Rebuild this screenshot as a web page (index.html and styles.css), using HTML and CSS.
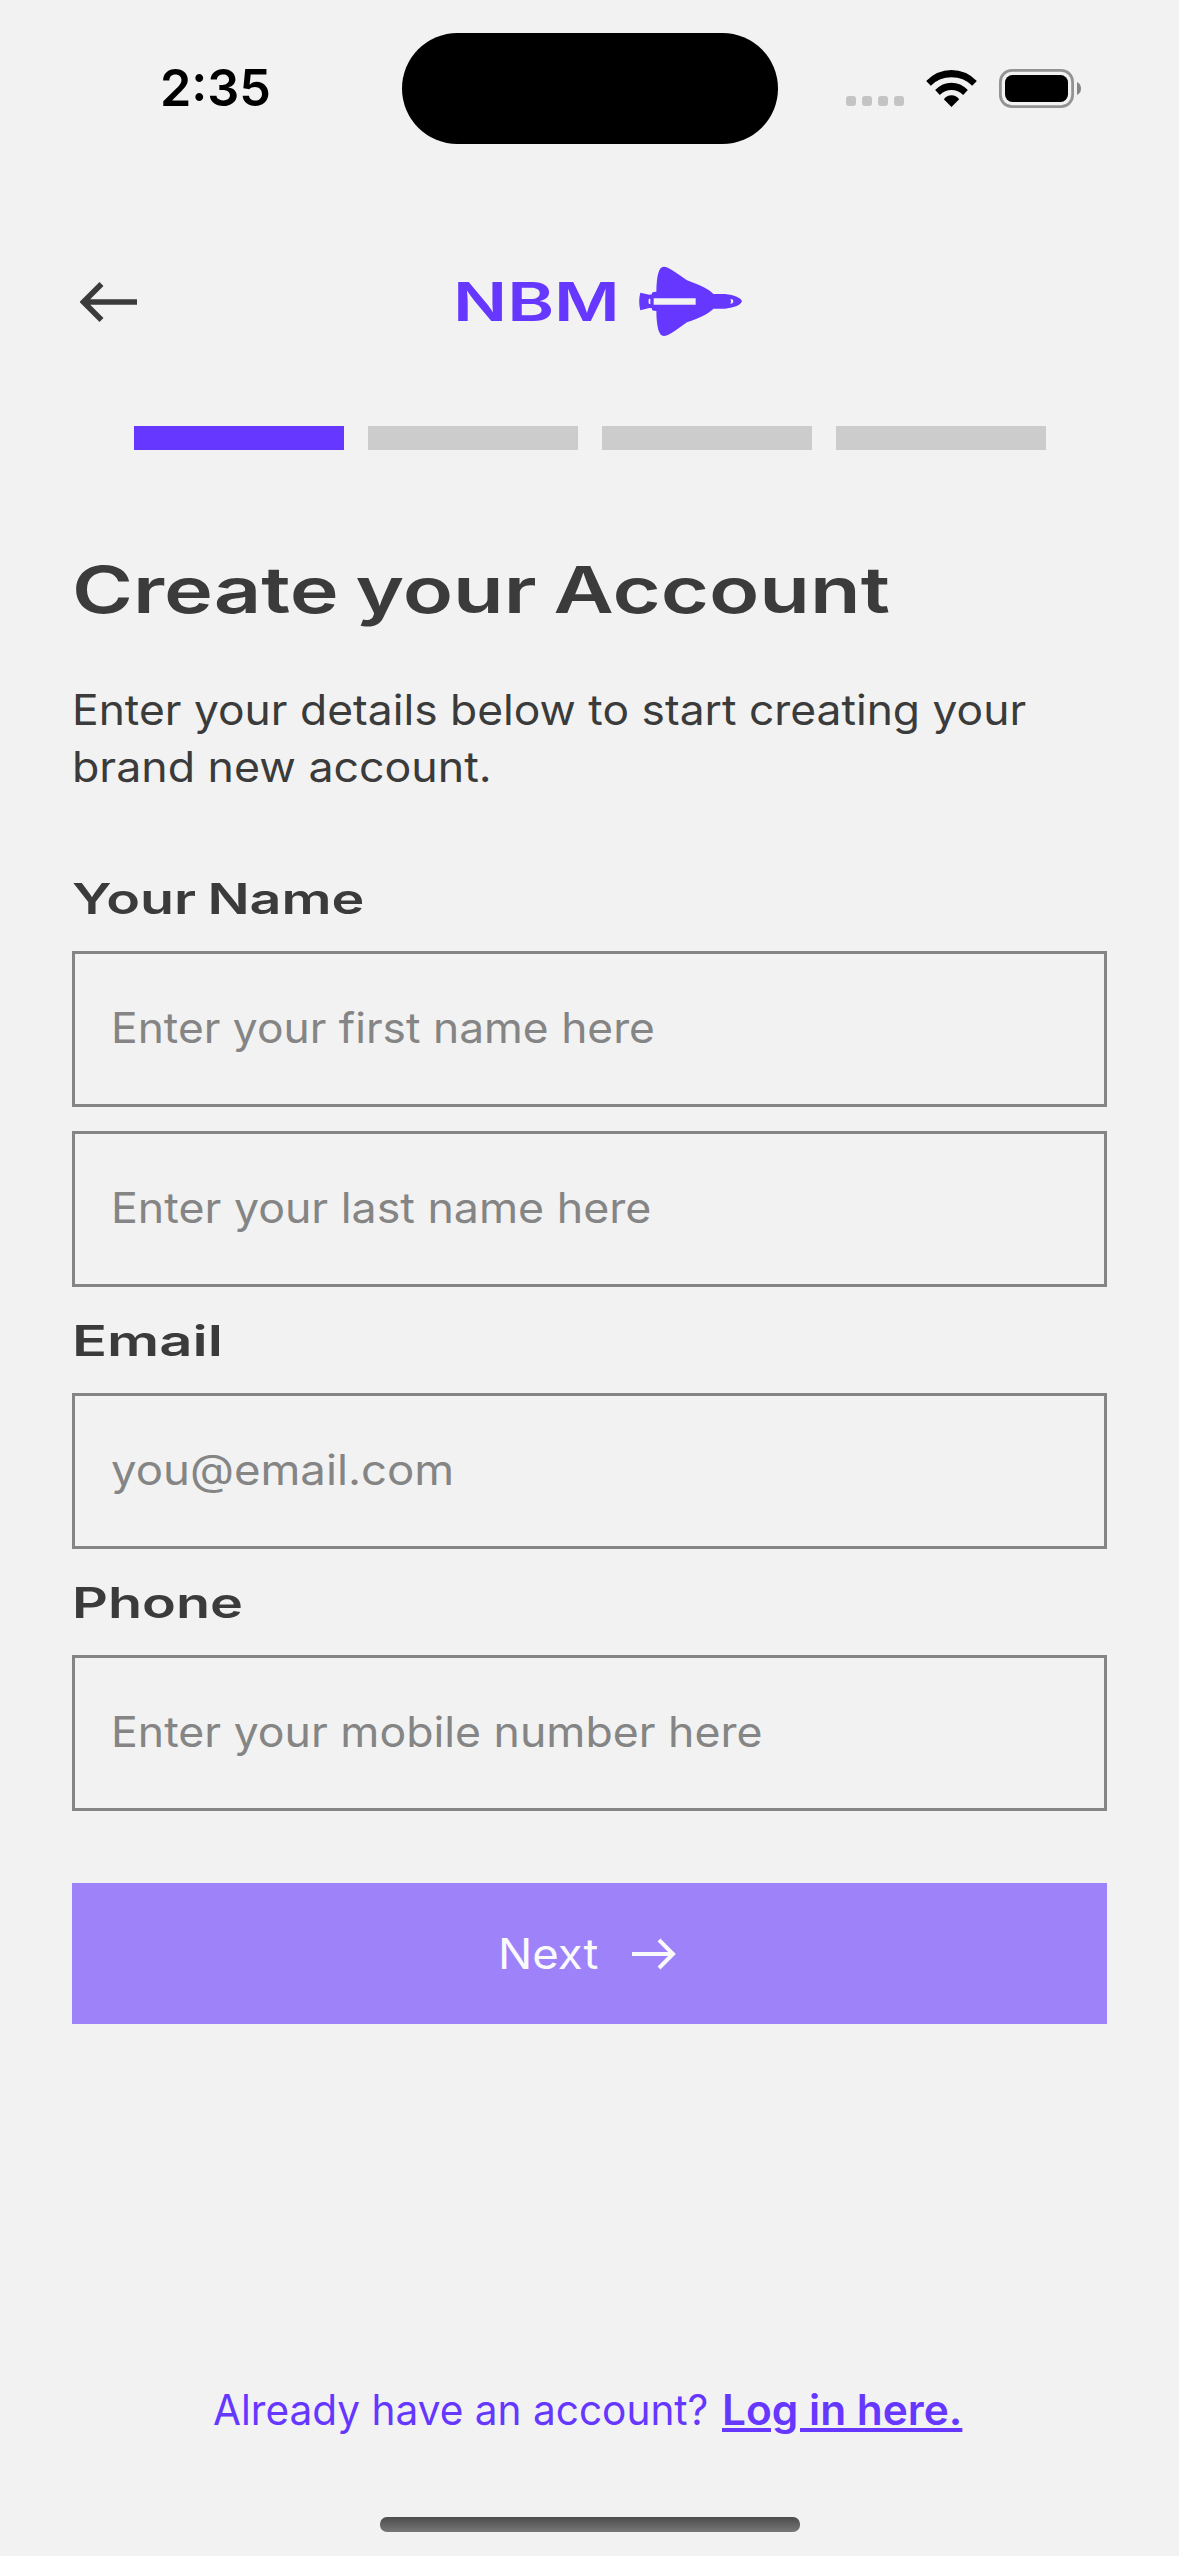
FILE: index.html
```html
<!DOCTYPE html>
<html lang="en">
<head>
<meta charset="utf-8">
<title>Create your Account</title>
<link rel="stylesheet" href="styles.css">
</head>
<body>
<div class="screen">
  <div class="status">
    <span class="time stretch">2:35</span>
    <span class="island"></span>
    <svg class="signal" viewBox="0 0 58 10" width="58" height="10">
      <rect width="10" height="10" rx="3"/><rect x="16" width="10" height="10" rx="3"/><rect x="32" width="10" height="10" rx="3"/><rect x="48" width="10" height="10" rx="3"/>
    </svg>
    <svg class="wifi" viewBox="0 0 152 111" width="51" height="37">
      <path d="M0 33Q32 0 76 0T152 33L138 47Q112 22 76 22T14 47Z"/>
      <path d="M27 60Q48 38 76 38T125 60L111 75Q96 60 76 60T41 75Z"/>
      <path d="M53 88Q62 76 76 76T99 88L76 111Z"/>
    </svg>
    <svg class="battery" viewBox="0 0 83 39" width="83" height="39">
      <rect x="1.4" y="1.4" width="72.2" height="36.2" rx="11.5" fill="none" stroke="#939393" stroke-width="2.8"/>
      <rect x="6" y="6" width="63" height="27" rx="7.5"/>
      <path d="M78 13Q82 15 82 19.5T78 26Z" fill="#858585"/>
    </svg>
  </div>

  <header class="header">
    <svg class="back" viewBox="0 0 57 42" width="57" height="42">
      <path d="M57 21H6M21.5 3L3.5 21L21.5 39" fill="none" stroke="#3a3b3a" stroke-width="5.6"/>
    </svg>
    <span class="brand stretch">NBM</span>
    <svg class="shuttle" viewBox="27 18 309 212" width="103" height="70.7">
      <path fill="#6637ff" fill-rule="evenodd" d="M31 98L58 104L66 103V98Q70 95 79 95Q80 20 101 20Q112 20 135 36L171 61Q235 84 250 102H285Q330 107 336 124Q330 142 285 146H250Q235 164 171 187L135 212Q112 228 101 228Q80 228 79 153Q70 153 66 150V145L58 144L31 151Q24 124 31 98ZM71 115V134H197V115ZM57 116Q54 124 57 132H61V116ZM301 117Q305 124 301 131Q310 131 310 124T301 117Z"/>
    </svg>
  </header>

  <div class="progress"><i class="on"></i><i></i><i></i><i></i></div>

  <main class="form">
    <h1 class="title stretch">Create your Account</h1>
    <p class="intro"><span class="stretch line1">Enter your details below to start creating your</span><span class="stretch line2">brand new account.</span></p>

    <div class="label"><span class="stretch l-name">Your Name</span></div>
    <div class="field"><span class="stretch f-first">Enter your first name here</span></div>
    <div class="field second"><span class="stretch f-last">Enter your last name here</span></div>

    <div class="label spaced"><span class="stretch l-email">Email</span></div>
    <div class="field"><span class="stretch f-email">you@email.com</span></div>

    <div class="label spaced"><span class="stretch l-phone">Phone</span></div>
    <div class="field"><span class="stretch f-phone">Enter your mobile number here</span></div>

    <div class="next" role="button">
      <span class="stretch n-text">Next</span>
      <svg viewBox="0 0 44 32" width="44" height="32"><path d="M0 16H40M27 2L41 16L27 30" fill="none" stroke="#fafafa" stroke-width="4"/></svg>
    </div>
  </main>

  <footer class="footer">
    <span class="stretch have">Already have an account?</span>
    <a class="stretch login">Log in here.</a>
  </footer>
  <div class="home"></div>
</div>
</body>
</html>
```

FILE: styles.css
```css
* { box-sizing: border-box; }
body {
  margin: 0;
  background: #f2f2f2;
  color: #3a3b3a;
  font-family: Inter, "Liberation Sans", sans-serif;
  font-size: 42px;
}
.screen {
  width: 1179px;
  height: 2556px;
  display: flex;
  flex-direction: column;
  overflow: hidden;
}
svg { display: block; flex: none; }

/* Extended letterforms: each text sets its own horizontal factor. */
.stretch {
  display: block;
  flex: none;
  white-space: nowrap;
  transform: scaleX(var(--sx, 1));
  transform-origin: 0 50%;
}

.status {
  height: 178px;
  padding-left: 160px;
  display: flex;
  align-items: center;
  flex: none;
}
.time {
  --sx: .986;
  width: 241.5px;
  padding-bottom: 3px;
  font-size: 51px;
  font-weight: 600;
  color: #000;
}
.island {
  width: 376px;
  height: 111px;
  margin-bottom: .4px;
  border-radius: 56px;
  background: #000;
}
.signal { margin: 24px 22px 0 68.5px; fill: #c4c4c4; }
.wifi { margin: -2px 22px 0 0; }
.battery { margin-top: -2px; }

.header {
  height: 84px;
  margin-top: 82px;
  padding-left: 80px;
  display: flex;
  align-items: center;
  flex: none;
}
.brand {
  --sx: 1.345;
  width: 186px;
  margin-left: 316px;
  font-size: 53px;
  font-weight: 600;
  color: #6637ff;
}
.shuttle { margin-bottom: 1px; }

.progress {
  display: flex;
  justify-content: center;
  gap: 24px;
  margin: 82px 133px 0 134px;
  flex: none;
}
.progress i { flex: 1; height: 24px; background: #ccc; }
.progress .on { background: #6637ff; }

.form { margin: 101px 72px 0; }
.title {
  --sx: 1.293;
  margin: 0;
  width: 640px;
  font-size: 64px;
  font-weight: 600;
  line-height: 78px;
  word-spacing: -3px;
}
.intro { margin: 52px 0 75px; line-height: 57px; }
.line1 { --sx: 1.056; width: 904px; }
.line2 { --sx: 1.064; width: 395px; }

.label { font-weight: 600; line-height: 58px; margin-bottom: 23px; }
.label.spaced { margin-top: 25px; }
.l-name { --sx: 1.323; width: 223px; word-spacing: -2px; }
.l-email { --sx: 1.38; width: 110px; }
.l-phone { --sx: 1.327; width: 129px; }

.field {
  height: 156px;
  padding: 0 0 3px 36px;
  border: 3px solid #848584;
  color: #848584;
  display: flex;
  align-items: center;
}
.field.second { margin-top: 24px; }
.f-first { --sx: 1.055; }
.f-last { --sx: 1.064; }
.f-email { --sx: 1.084; }
.f-phone { --sx: 1.062; }

.next {
  height: 141px;
  margin-top: 72px;
  padding-right: 5px;
  display: flex;
  align-items: center;
  justify-content: center;
  background: #9d82fa;
  color: #fafafa;
}
.n-text { --sx: 1.083; width: 134.6px; }

.footer {
  margin-top: auto;
  padding-left: 213.4px;
  height: 60px;
  line-height: 60px;
  display: flex;
  color: #6637ff;
  flex: none;
}
.have { --sx: .966; width: 508.4px; }
.login {
  --sx: 1.01;
  font-weight: 600;
  text-decoration: underline;
  text-decoration-thickness: 4px;
  text-underline-offset: 3px;
}
.home {
  width: 420px;
  height: 15px;
  margin: 77px auto 24px 380px;
  border-radius: 7px;
  background: linear-gradient(#4c4c4c, #777);
  flex: none;
}
```
